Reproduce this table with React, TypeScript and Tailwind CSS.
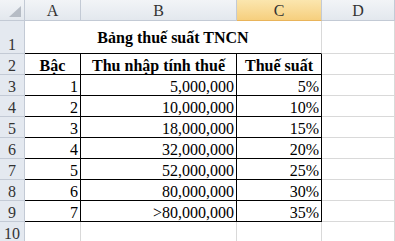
const rows = [
  { n: 3, bac: '1', thu: '5,000,000', ts: '5%' },
  { n: 4, bac: '2', thu: '10,000,000', ts: '10%' },
  { n: 5, bac: '3', thu: '18,000,000', ts: '15%' },
  { n: 6, bac: '4', thu: '32,000,000', ts: '20%' },
  { n: 7, bac: '5', thu: '52,000,000', ts: '25%' },
  { n: 8, bac: '6', thu: '80,000,000', ts: '30%' },
  { n: 9, bac: '7', thu: '>80,000,000', ts: '35%' },
]

function RowHead({ n, tall }: { n: number; tall?: boolean }) {
  return (
    <div
      className={`w-[25px] shrink-0 flex items-end justify-center bg-[#e4e9f0] border-r border-b border-[#c3cad5] text-[#333] leading-4 ${
        tall ? 'h-[33px]' : 'h-[21px]'
      }`}
    >
      {n}
    </div>
  )
}

export default function App() {
  return (
    <div
      className="w-[395px] h-[241px] overflow-hidden bg-white text-[16px] text-black"
      style={{ fontFamily: '"Liberation Serif", "Times New Roman", serif' }}
    >
      {/* column headers */}
      <div className="flex h-[21px]">
        <div className="w-[25px] shrink-0 relative bg-gradient-to-b from-[#f2f4f7] to-[#e3e8ee] border-r border-b border-[#c3cad5]">
          <svg className="absolute left-0 top-0" width="24" height="20" viewBox="0 0 24 20">
            <polygon points="9,17 21,17 21,6" fill="#b6bcc5" />
          </svg>
        </div>
        <div className="w-[56px] shrink-0 flex items-end justify-center bg-gradient-to-b from-[#f2f4f7] to-[#e3e8ee] border-r border-b border-[#c3cad5] text-[#333] leading-4 pb-[1px]">
          A
        </div>
        <div className="w-[156px] shrink-0 flex items-end justify-center bg-gradient-to-b from-[#f2f4f7] to-[#e3e8ee] border-r border-b border-[#c3cad5] text-[#333] leading-4 pb-[1px]">
          B
        </div>
        <div className="w-[85px] shrink-0 flex items-end justify-center bg-gradient-to-b from-[#fbe6ae] to-[#f6cf7e] border-r border-b border-r-[#c3cad5] border-b-[#e9b45a] text-[#333] leading-4 pb-[1px]">
          C
        </div>
        <div className="w-[73px] shrink-0 flex items-end justify-center bg-gradient-to-b from-[#f2f4f7] to-[#e3e8ee] border-r border-b border-[#c3cad5] text-[#333] leading-4 pb-[1px]">
          D
        </div>
      </div>

      {/* row 1: merged title */}
      <div className="flex">
        <RowHead n={1} tall />
        <div className="w-[297px] shrink-0 h-[33px] flex items-center justify-center border-r border-r-[#d9d9d9] border-b border-b-black font-bold leading-4 pt-[1px]">
          Bảng thuế suất TNCN
        </div>
        <div className="w-[73px] shrink-0 h-[33px] border-r border-b border-[#d9d9d9]" />
      </div>

      {/* row 2: table header */}
      <div className="flex">
        <RowHead n={2} />
        <div className="w-[56px] shrink-0 h-[21px] flex items-end justify-center border-r border-b border-black font-bold leading-4">
          Bậc
        </div>
        <div className="w-[156px] shrink-0 h-[21px] flex items-end justify-center border-r border-b border-black font-bold leading-4">
          Thu nhập tính thuế
        </div>
        <div className="w-[85px] shrink-0 h-[21px] flex items-end justify-center border-r border-b border-black font-bold leading-4">
          Thuế suất
        </div>
        <div className="w-[73px] shrink-0 h-[21px] border-r border-b border-[#d9d9d9]" />
      </div>

      {rows.map((r) => (
        <div key={r.n} className="flex">
          <RowHead n={r.n} />
          <div className="w-[56px] shrink-0 h-[21px] flex items-end justify-end pr-[2px] border-r border-b border-black leading-4">
            {r.bac}
          </div>
          <div className="w-[156px] shrink-0 h-[21px] flex items-end justify-end pr-[2px] border-r border-b border-black leading-4">
            {r.thu}
          </div>
          <div className="w-[85px] shrink-0 h-[21px] flex items-end justify-end pr-[2px] border-r border-b border-black leading-4">
            {r.ts}
          </div>
          <div className="w-[73px] shrink-0 h-[21px] border-r border-b border-[#d9d9d9]" />
        </div>
      ))}

      {/* row 10 */}
      <div className="flex">
        <RowHead n={10} />
        <div className="w-[56px] shrink-0 h-[21px] border-r border-b border-[#d9d9d9]" />
        <div className="w-[156px] shrink-0 h-[21px] border-r border-b border-[#d9d9d9]" />
        <div className="w-[85px] shrink-0 h-[21px] border-r border-b border-[#d9d9d9]" />
        <div className="w-[73px] shrink-0 h-[21px] border-r border-b border-[#d9d9d9]" />
      </div>
    </div>
  )
}
